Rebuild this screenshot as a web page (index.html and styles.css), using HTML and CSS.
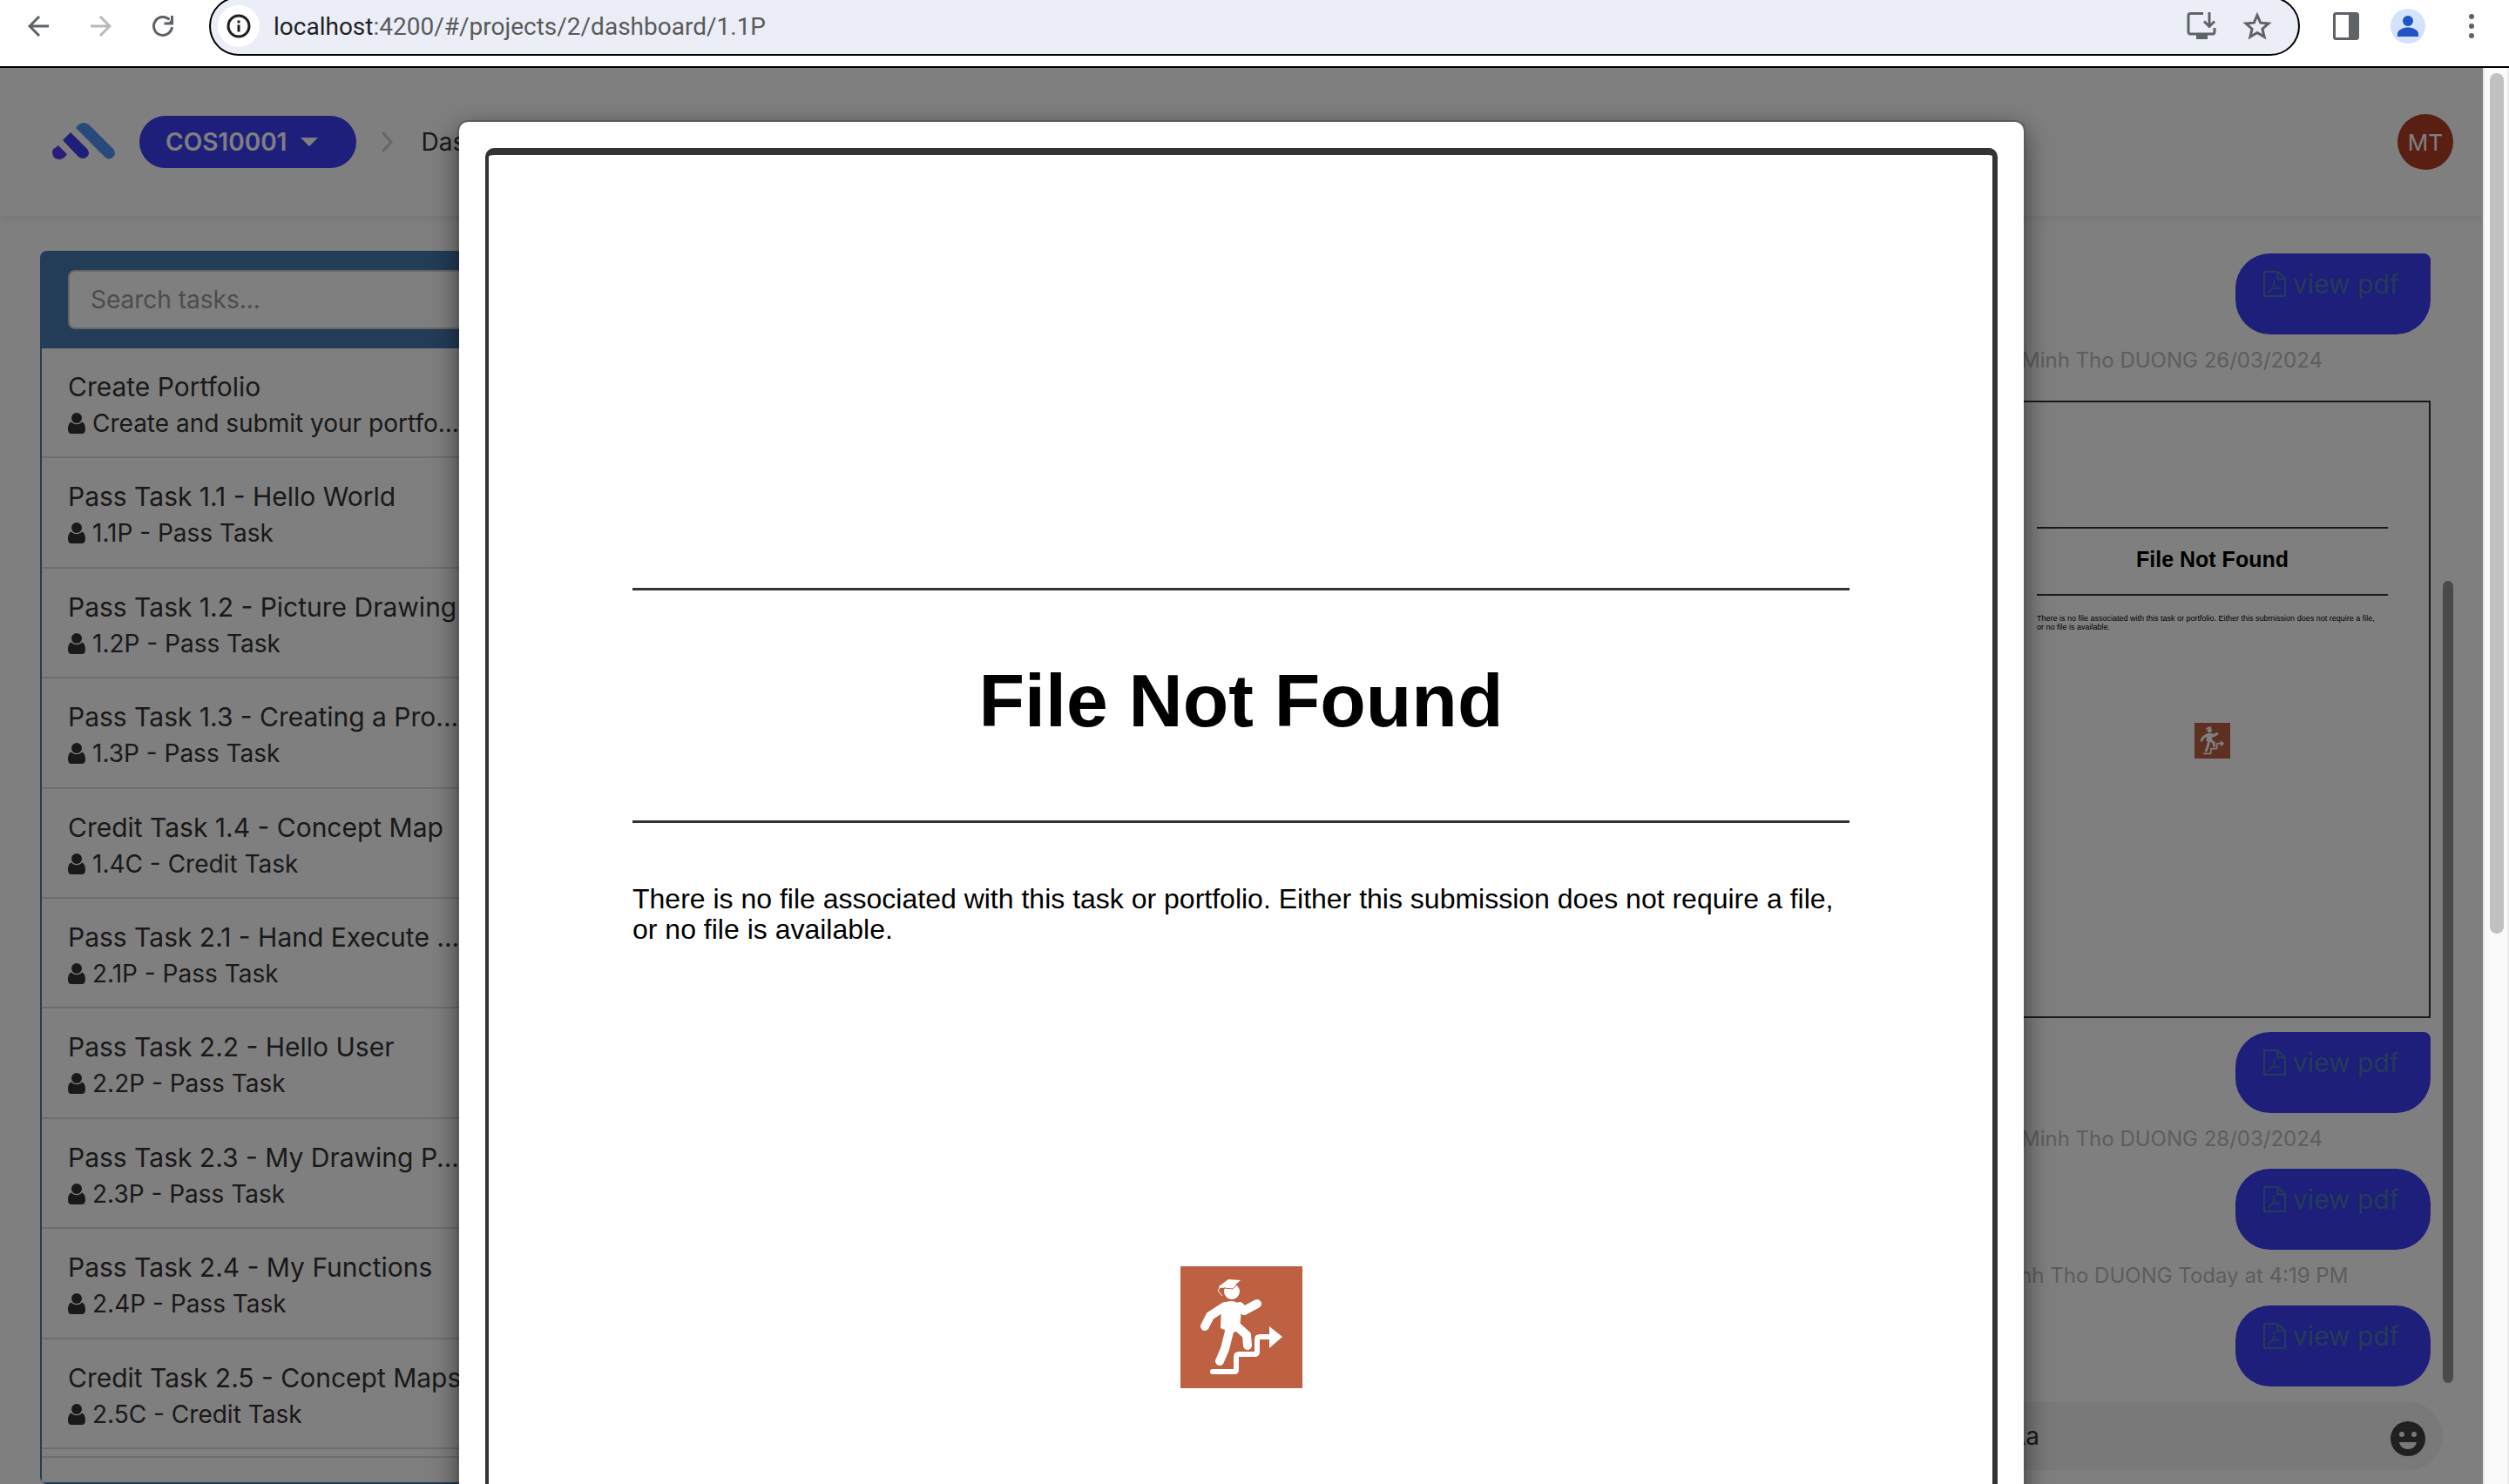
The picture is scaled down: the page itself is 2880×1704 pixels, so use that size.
FILE: index.html
```html
<!DOCTYPE html>
<html lang="en">
<head>
<meta charset="utf-8">
<title>COS10001 Dashboard</title>
<link rel="stylesheet" href="styles.css">
</head>
<body>
<svg class="sprite" aria-hidden="true">
  <symbol id="i-user" viewBox="0 0 20 24"><circle cx="10" cy="6" r="6"/><path d="M4 10.500C1 11.500 0 15 0 19c0 3 1.500 5 4 5h12c2.500 0 4-2 4-5 0-4-1-7.500-4-8.500-1.500 1.700-3.500 2.700-6 2.700s-4.500-1-6-2.700z"/></symbol>
  <symbol id="i-pdf" viewBox="0 0 26 30"><g fill="none" stroke="currentColor" stroke-width="2" stroke-linejoin="round"><path d="M1 1h15.500l8.500 8v20H1z"/><path d="M16.500 1v8.500H25"/><path stroke-width="1.200" d="M12 10.500c-1 3 .5 5.500 2 7.500 1.500 2 3.500 2.500 6 2.500M12.500 10c1 5-2.500 12-7.500 15.500M7 22.500c3-2 8-3 13.500-2.500"/></g></symbol>
  <symbol id="i-steps" viewBox="0 0 140 140"><path fill="#bd6142" d="M0 0h140v140H0z"/><g fill="none" stroke="#fff" stroke-linecap="round" stroke-linejoin="round"><path stroke-width="6" d="M37 121h25q2 0 2-2v-15q0-3 3-3h18q3 0 3-3V84q0-3 3-3h12"/><path stroke-width="10" d="M51 46 34 57l-6 12M68 46l5 5 15-8M57 71l-6 24-6 14M66 70l10 9 1 12"/></g><path fill="#fff" d="m102 69 15 12-15 13zM50 42q8-4 16 0l4 6-2 25-9 4-13-6 1-25z"/><circle cx="59" cy="29" r="9" fill="#fff"/><path fill="#fff" d="m44 23 11-8 14 1-9 8-15 1z"/><path fill="none" stroke="#fff" stroke-width="1" d="m46 23-3 5 5 6"/><path fill="none" stroke="#bd6142" stroke-width="1" d="m50 25 10 1 8-8"/></symbol>
</svg>

<header class="toolbar">
  <button class="tool back" aria-label="Back"><svg width="24" height="24" viewBox="0 0 24 24"><path d="M13 1 2 12l11 11M2 12h22" fill="none" stroke="currentColor" stroke-width="3"/></svg></button>
  <button class="tool forward" aria-label="Forward"><svg width="24" height="24" viewBox="0 0 24 24"><path d="m11 1 11 11-11 11M22 12H0" fill="none" stroke="currentColor" stroke-width="3"/></svg></button>
  <button class="tool reload" aria-label="Reload"><svg width="26" height="26" viewBox="0 0 26 26"><path d="M20.500 5.500A10.500 10.500 0 1 0 23.500 14" fill="none" stroke="currentColor" stroke-width="3"/><path d="M25 1v10.500H14.500v-3H20L22 6V1z" fill="currentColor"/></svg></button>
  <div class="omnibox">
    <button class="info" aria-label="Site information"><svg width="28" height="28" viewBox="0 0 28 28"><circle cx="14" cy="14" r="12" fill="none" stroke="currentColor" stroke-width="3"/><path d="M12.500 12.500h3v8h-3zM12.500 7.500h3v3h-3z" fill="currentColor"/></svg></button>
    <span class="url"><b>localhost</b>:4200/#/projects/2/dashboard/1.1P</span>
    <button class="tool" aria-label="Install"><svg width="34" height="34" viewBox="0 0 34 34"><path d="M19 2.500H4.500Q2 2.500 2 5v18.500Q2 26 4.500 26h25q2.500 0 2.500-2.500V19" fill="none" stroke="currentColor" stroke-width="3"/><path d="M11 26h13v6H11z" fill="currentColor"/><path d="M26 1v16M20 11.500l6 6 6-6" fill="none" stroke="currentColor" stroke-width="3"/></svg></button>
    <button class="tool" aria-label="Bookmark"><svg width="34" height="34" viewBox="0 0 34 34"><path d="m17 4.500 3.700 8.700 9.300.8-7.100 6.200 2.200 9.200L17 24.500l-8.100 4.900 2.200-9.200L4 14l9.300-.8z" fill="none" stroke="currentColor" stroke-width="3"/></svg></button>
  </div>
  <button class="tool side" aria-label="Side panel"><svg width="30" height="32" viewBox="0 0 30 32"><rect x="1.500" y="1.500" width="27" height="29" rx="2" fill="none" stroke="currentColor" stroke-width="3"/><path d="M18 1h11v30H18z" fill="currentColor"/></svg></button>
  <button class="tool profile" aria-label="Profile"><svg width="40" height="40" viewBox="0 0 40 40"><circle cx="20" cy="20" r="20" fill="#d5e2fb"/><circle cx="20" cy="14" r="6" fill="#2253c4"/><path d="M8 32v-3c0-5 7-7.500 12-7.500S32 24 32 29v3z" fill="#2253c4"/></svg></button>
  <button class="tool" aria-label="Menu"><svg width="6" height="28" viewBox="0 0 6 28"><g fill="currentColor"><circle cx="3" cy="3" r="3"/><circle cx="3" cy="14" r="3"/><circle cx="3" cy="25" r="3"/></g></svg></button>
</header>

<div class="window">
  <div class="app">
    <nav class="app-header">
      <svg class="logo" width="72" height="44" viewBox="0 0 72 44"><path fill="#5092f4" d="M27 6q4-6 9-6 4 0 7 3l27 27q4 5 0 9-5 5-10 0z"/><path fill="#3c3cf6" d="M12 20l9-9 19 19q4 5 0 9-5 4-10 0z"/><path fill="#5a3af6" d="M7 26l10 10q-4 6-9 6-8-1-8-8 0-4 3-5z"/></svg>
      <button class="unit">COS10001<svg width="20" height="10" viewBox="0 0 20 10"><path d="M0 0h20L10 10z" fill="currentColor"/></svg></button>
      <svg class="chevron" width="14" height="24" viewBox="0 0 14 24"><path d="m2 1 10 11L2 23" fill="none" stroke="currentColor" stroke-width="3"/></svg>
      <a class="crumb" href="#">Dashboard</a>
      <button class="avatar">MT</button>
    </nav>

    <main class="content">
      <section class="tasks">
        <div class="tasks-head"><input class="search" type="search" placeholder="Search tasks..." aria-label="Search tasks"></div>
        <ul class="task-list">
          <li><h4>Create Portfolio</h4><p><svg><use href="#i-user"/></svg>Create and submit your portfo...</p></li>
          <li><h4>Pass Task 1.1 - Hello World</h4><p><svg><use href="#i-user"/></svg>1.1P - Pass Task</p></li>
          <li><h4>Pass Task 1.2 - Picture Drawing</h4><p><svg><use href="#i-user"/></svg>1.2P - Pass Task</p></li>
          <li><h4>Pass Task 1.3 - Creating a Pro...</h4><p><svg><use href="#i-user"/></svg>1.3P - Pass Task</p></li>
          <li><h4>Credit Task 1.4 - Concept Map</h4><p><svg><use href="#i-user"/></svg>1.4C - Credit Task</p></li>
          <li><h4>Pass Task 2.1 - Hand Execute ...</h4><p><svg><use href="#i-user"/></svg>2.1P - Pass Task</p></li>
          <li><h4>Pass Task 2.2 - Hello User</h4><p><svg><use href="#i-user"/></svg>2.2P - Pass Task</p></li>
          <li><h4>Pass Task 2.3 - My Drawing P...</h4><p><svg><use href="#i-user"/></svg>2.3P - Pass Task</p></li>
          <li><h4>Pass Task 2.4 - My Functions</h4><p><svg><use href="#i-user"/></svg>2.4P - Pass Task</p></li>
          <li><h4>Credit Task 2.5 - Concept Maps</h4><p><svg><use href="#i-user"/></svg>2.5C - Credit Task</p></li>
        </ul>
        <div class="tasks-foot"></div>
      </section>

      <section class="chat">
        <div class="chat-scroll">
          <div class="messages">
            <a class="bubble first" href="#"><svg><use href="#i-pdf"/></svg>view pdf</a>
            <p class="stamp">Minh Tho DUONG 26/03/2024</p>
            <article class="page preview">
              <div class="title-block"><h2>File Not Found</h2></div>
              <p>There is no file associated with this task or portfolio. Either this submission does not require a file,<br>or no file is available.</p>
              <svg class="steps"><use href="#i-steps"/></svg>
            </article>
            <a class="bubble first" href="#"><svg><use href="#i-pdf"/></svg>view pdf</a>
            <p class="stamp">Minh Tho DUONG 28/03/2024</p>
            <a class="bubble" href="#"><svg><use href="#i-pdf"/></svg>view pdf</a>
            <p class="stamp">Minh Tho DUONG Today at 4:19 PM</p>
            <a class="bubble" href="#"><svg><use href="#i-pdf"/></svg>view pdf</a>
          </div>
          <div class="chat-bar"><div class="chat-thumb"></div></div>
        </div>
        <form class="composer">
          <input type="text" placeholder="Aa" aria-label="Message">
          <button type="button" aria-label="Emoji"><svg width="40" height="40" viewBox="0 0 40 40"><circle cx="20" cy="20" r="20" fill="#404040"/><g fill="#f2f2f2"><circle cx="13" cy="15" r="3"/><circle cx="27" cy="15" r="3"/><path d="M10 24h20c-1 5-5 8-10 8s-9-3-10-8z"/></g></svg></button>
        </form>
      </section>
    </main>

    <div class="backdrop">
      <div class="modal" role="dialog" aria-label="PDF preview">
        <article class="page full">
          <div class="title-block"><h1>File Not Found</h1></div>
          <p>There is no file associated with this task or portfolio. Either this submission does not require a file,<br>or no file is available.</p>
          <svg class="steps"><use href="#i-steps"/></svg>
        </article>
      </div>
    </div>
  </div>
  <div class="page-bar"><div class="page-thumb"></div></div>
</div>
</body>
</html>
```

FILE: styles.css
```css
* { box-sizing: border-box; }
body { margin: 0; height: 100vh; display: flex; flex-direction: column; overflow: hidden; background: #fff; font-family: Inter, "Liberation Sans", sans-serif; font-size: 28px; color: #333; }
h1, h2, h4, p, ul { margin: 0; padding: 0; font-weight: 400; }
ul { list-style: none; }
button { padding: 0; border: 0; background: none; font: inherit; color: inherit; }
a { text-decoration: none; color: inherit; }
svg { display: block; flex: none; }
.sprite { display: none; }

/* Browser toolbar */
.toolbar { flex: none; display: flex; align-items: center; height: 78px; padding: 0 40px 16px 32px; border-bottom: 2px solid #000; overflow: hidden; }
.tool { flex: none; color: #5f6368; }
.back { margin-right: 48px; }
.forward { margin-right: 46px; color: #bababa; }
.reload { margin-right: 40px; }
.omnibox { flex: 1; display: flex; align-items: center; gap: 30px; height: 68px; margin-right: 38px; padding: 0 30px 0 8px; border: 2px solid #000; border-radius: 34px; background: #ebeef7; }
.info { display: grid; place-items: center; width: 48px; height: 48px; margin-right: -14px; border-radius: 50%; background: #fff; color: #1f1f1f; }
.url { flex: 1; color: #5a5a5a; font-family: Roboto, sans-serif; font-size: 28px; }
.url b { font-weight: 400; color: #1f1f1f; }
.side { margin-right: 36px; }
.profile { margin-right: 50px; }

/* Page area and its scrollbar */
.window { flex: 1; min-height: 0; display: flex; }
.app { position: relative; flex: 1; min-width: 0; display: flex; flex-direction: column; overflow: hidden; }
.page-bar { width: 30px; padding: 6px 4px 0 6px; border-left: 2px solid #e8e8e8; border-right: 2px solid #ededed; background: #fafafa; }
.page-thumb { height: 61%; border-radius: 8px; background: #c1c1c1; }

/* App header */
.app-header { flex: none; display: flex; align-items: center; height: 170px; padding: 0 34px 0 60px; box-shadow: 0 4px 10px rgba(0, 0, 0, .07); }
.unit { display: flex; align-items: center; gap: 16px; height: 60px; margin: 0 28px; padding: 0 44px 0 30px; border-radius: 30px; background: #3c3cf6; color: #fff; font-weight: 600; }
.chevron { margin-right: 32px; color: #ccc; }
.avatar { width: 64px; height: 64px; margin-left: auto; border-radius: 50%; background: #b23e24; color: #fff; font-size: 26px; }

/* Columns */
.content { flex: 1; min-height: 0; display: flex; justify-content: space-between; padding: 40px 34px 0 46px; }

/* Task list */
.tasks { width: 600px; display: flex; flex-direction: column; border: 2px solid #4778b0; border-radius: 8px; }
.tasks-head { flex: none; height: 110px; padding: 20px 30px; background: #4778b0; }
.search { width: 100%; height: 68px; padding: 0 24px; border: 2px solid #ccc; border-radius: 8px; background: #fff; font: inherit; appearance: none; }
.search::placeholder { color: #999; opacity: 1; }
.task-list { flex: 1; min-height: 0; display: grid; grid-auto-rows: 1fr; padding-bottom: 8px; white-space: nowrap; }
.task-list li { padding: 23px 0 0 30px; border-bottom: 2px solid #ddd; }
.task-list h4 { font-size: 30px; line-height: 42px; }
.task-list p { display: flex; align-items: center; gap: 8px; line-height: 42px; }
.task-list svg { width: 20px; height: 24px; fill: currentColor; }
.tasks-foot { flex: none; height: 30px; border-top: 2px solid #ddd; background: #fcfcfc; }

/* Chat */
.chat { width: 620px; display: flex; flex-direction: column; justify-content: flex-end; padding-bottom: 16px; }
.chat-scroll { flex: 1; min-height: 0; display: flex; align-items: stretch; justify-content: space-between; padding: 3px 0 18px; }
.messages { width: 594px; display: flex; flex-direction: column; align-items: flex-end; }
.bubble { display: flex; align-items: center; gap: 8px; width: 224px; height: 93px; padding: 0 0 24px 32px; border-radius: 40px; background: #3c3cf6; color: #4778b0; font-size: 30px; }
.bubble.first { border-top-right-radius: 8px; }
.bubble svg { width: 26px; height: 30px; }
.stamp { width: 100%; height: 64px; line-height: 60px; text-align: center; font-size: 24px; color: #bbb; }
.chat-bar { width: 12px; display: flex; align-items: flex-end; padding-bottom: 4px; }
.chat-thumb { width: 100%; height: 71%; border-radius: 6px; background: #959595; }
.composer { flex: none; display: flex; align-items: center; height: 78px; margin-right: 12px; padding: 0 20px 0 110px; border-radius: 39px; background: #f2f2f2; }
.composer input { flex: 1; min-width: 0; border: 0; padding: 0; background: none; font: inherit; }
.composer input::placeholder { color: #333; opacity: 1; }
.composer button { margin-top: 6px; }

/* Document page, shown both full size and as a preview */
.page { display: flex; flex-direction: column; background: #fff; color: #000; font-family: "Liberation Sans", sans-serif; }
.page h1, .page h2 { font-weight: 700; }
.page .title-block { display: grid; place-items: center; border: solid #333; }
.steps { align-self: center; }
.full { height: 2400px; padding: 497px 164px 0 165px; border: solid #333; border-width: 8px 6px 4px 4px; border-radius: 10px; }
.full .title-block { height: 270px; padding-bottom: 12px; border-width: 3px 0; }
.full h1 { font-size: 86px; }
.full p { margin-top: 70px; font-size: 32px; line-height: 35px; white-space: nowrap; }
.full .steps { width: 140px; height: 140px; margin-top: 369px; }
.preview { width: 501px; height: 709px; margin: 12px 0 16px; padding: 143px 47px 0; border: 2px solid #333; }
.preview .title-block { height: 79px; padding-bottom: 4px; border-width: 2px 0; }
.preview h2 { font-size: 25px; }
.preview p { margin-top: 21px; font-size: 9px; line-height: 10px; white-space: nowrap; }
.preview .steps { width: 41px; height: 41px; margin-top: 105px; }

/* Modal */
.backdrop { position: absolute; inset: 0; display: flex; justify-content: center; align-items: flex-start; padding-top: 60px; background: rgba(0, 0, 0, .5); }
.modal { width: 1800px; padding: 30px; border: 2px solid rgba(0, 0, 0, .2); border-radius: 12px; background: #fff; background-clip: padding-box; box-shadow: 0 10px 30px rgba(0, 0, 0, .5); }
```
